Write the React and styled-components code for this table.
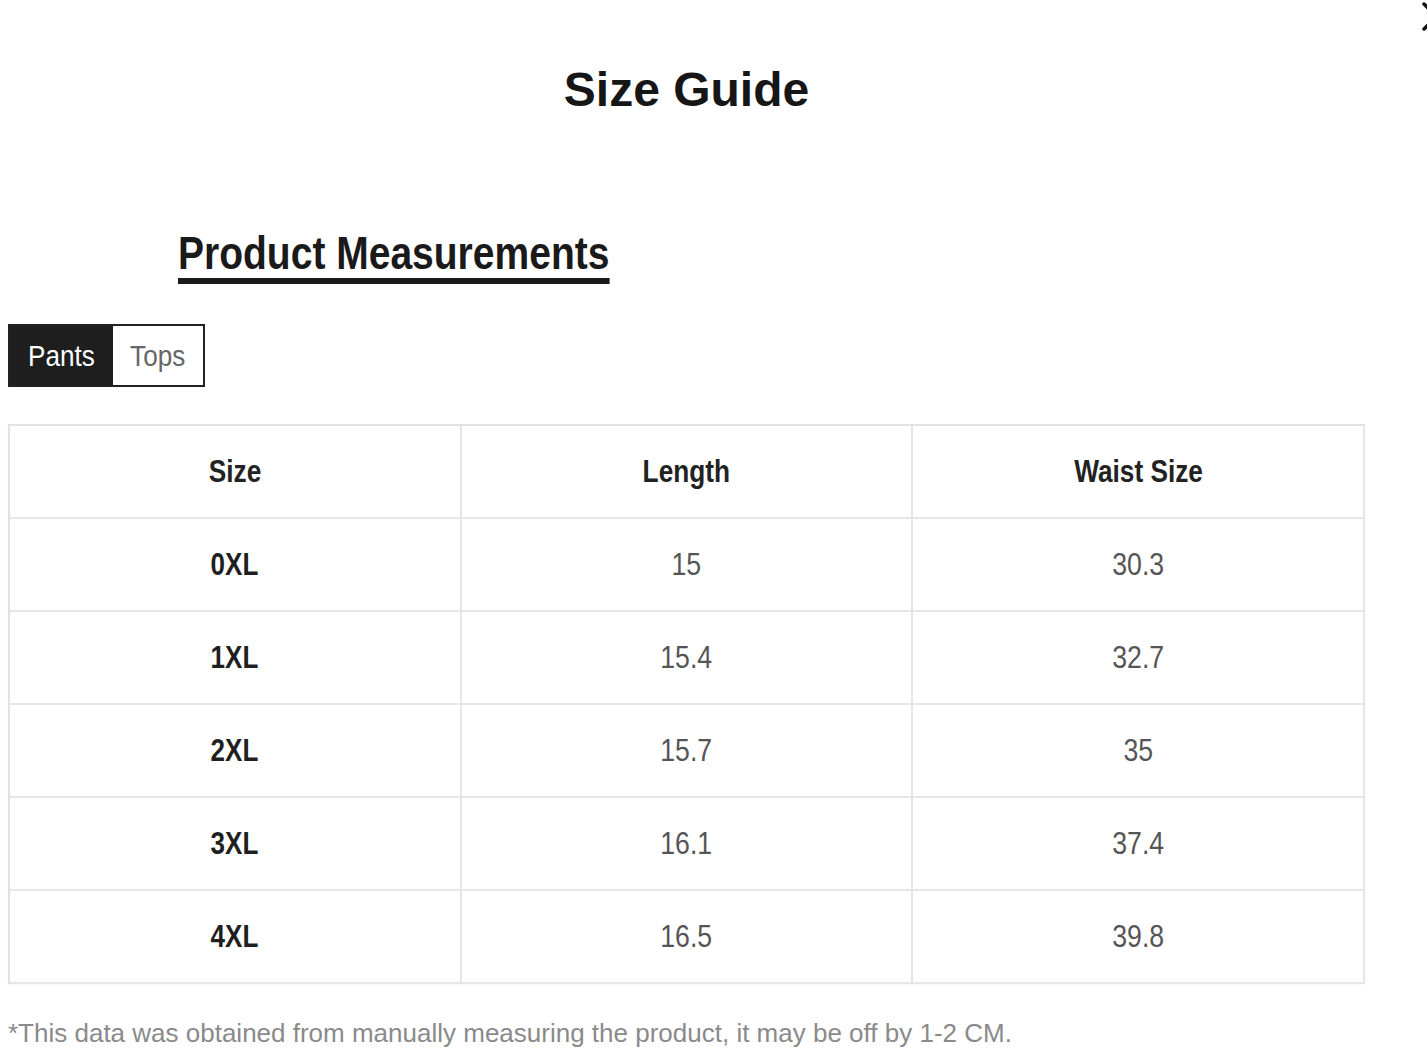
import React, { useState } from 'react';
import styled, { createGlobalStyle } from 'styled-components';

const SANS = '"Liberation Sans", Arial, Helvetica, sans-serif';

const GlobalStyle = createGlobalStyle`
  html, body {
    margin: 0;
    padding: 0;
    background: #ffffff;
    overflow: hidden;
  }
  body {
    font-family: ${SANS};
    color: #1a1a1a;
  }
`;

const sizes = {
  Pants: {
    columns: ['Size', 'Length', 'Waist Size'],
    rows: [
      ['0XL', '15', '30.3'],
      ['1XL', '15.4', '32.7'],
      ['2XL', '15.7', '35'],
      ['3XL', '16.1', '37.4'],
      ['4XL', '16.5', '39.8'],
    ],
  },
  Tops: {
    columns: ['Size', 'Length', 'Bust'],
    rows: [
      ['0XL', '25.2', '38.6'],
      ['1XL', '25.6', '40.9'],
      ['2XL', '26', '43.3'],
      ['3XL', '26.4', '45.7'],
      ['4XL', '26.8', '48'],
    ],
  },
};

// the condensed face of the original is not installed, so squeeze the glyphs
const Narrow = styled.span`
  display: inline-block;
  white-space: nowrap;
  transform: scaleX(${(p) => p.$scale || 0.83});
`;

const SizeGuide = () => {
  const [tab, setTab] = useState('Pants');
  const { columns, rows } = sizes[tab];

  return (
    <>
      <GlobalStyle />
      <Page>
        <CloseButton aria-label="Close">
          <svg width="30" height="30" viewBox="0 0 30 30">
            <path d="M2 3 L27 28 M2 28 L27 3" stroke="#111" strokeWidth="3.5" strokeLinecap="round" />
          </svg>
        </CloseButton>

        <Content>
          <Title>Size Guide</Title>

          <Heading>Product Measurements</Heading>

          <Tabs>
            {Object.keys(sizes).map((name) => (
              <Tab
                key={name}
                $active={name === tab}
                $width={name === 'Pants' ? 103 : 90}
                onClick={() => setTab(name)}
              >
                <Narrow $scale={0.87}>{name}</Narrow>
              </Tab>
            ))}
          </Tabs>

          <Table>
            {columns.map((col) => (
              <HeadCell key={col}>
                <Narrow $scale={0.82}>{col}</Narrow>
              </HeadCell>
            ))}
            {rows.map((row) =>
              row.map((value, i) => (
                <Cell key={row[0] + i} $strong={i === 0}>
                  <Narrow $scale={i === 0 ? 0.84 : 0.86}>{value}</Narrow>
                </Cell>
              ))
            )}
          </Table>

          <Note>
            *This data was obtained from manually measuring the product, it may be off by 1-2 CM.
          </Note>
        </Content>
      </Page>
    </>
  );
};

const Page = styled.div`
  position: relative;
  width: 1427px;
  height: 1055px;
  overflow: hidden;
`;

const CloseButton = styled.button`
  position: absolute;
  left: 1422px;
  top: 1px;
  padding: 0;
  border: none;
  background: none;
  cursor: pointer;
  svg {
    display: block;
  }
`;

const Content = styled.div`
  width: 1357px;
  margin-left: 8px;
  padding-top: 66px;
  display: flex;
  flex-direction: column;
`;

const Title = styled.h1`
  margin: 0;
  font-family: ${SANS};
  font-weight: 700;
  font-size: 48px;
  line-height: 48px;
  text-align: center;
  color: #161616;
`;

const Heading = styled.h2`
  align-self: flex-start;
  margin: 115px 0 0 170px;
  padding-bottom: 2px;
  font-family: ${SANS};
  font-weight: 700;
  font-size: 47px;
  line-height: 47px;
  color: #1a1a1a;
  border-bottom: 6px solid #1a1a1a;
  white-space: nowrap;
  transform: scaleX(0.83);
  transform-origin: left center;
`;

const Tabs = styled.div`
  align-self: flex-start;
  display: flex;
  height: 59px;
  margin-top: 40px;
  border: 2px solid #222;
`;

const Tab = styled.button`
  display: flex;
  align-items: center;
  justify-content: center;
  width: ${(p) => p.$width}px;
  padding: 0;
  border: none;
  background: ${(p) => (p.$active ? '#1e1e1e' : '#ffffff')};
  color: ${(p) => (p.$active ? '#ffffff' : '#666666')};
  font-family: ${SANS};
  font-size: 30px;
  cursor: pointer;
`;

const Table = styled.div`
  display: grid;
  grid-template-columns: repeat(3, 1fr);
  grid-auto-rows: 93px;
  margin-top: 37px;
  border-top: 2px solid #e2e2e2;
  border-left: 2px solid #e2e2e2;
  box-shadow: 0 1px 2px rgba(0, 0, 0, 0.04);
`;

const Cell = styled.div`
  display: flex;
  align-items: center;
  justify-content: center;
  border-right: 2px solid #e6e6e6;
  border-bottom: 2px solid #e6e6e6;
  font-family: ${SANS};
  font-size: 31px;
  font-weight: ${(p) => (p.$strong ? 700 : 400)};
  color: ${(p) => (p.$strong ? '#1f1f1f' : '#555555')};
`;

const HeadCell = styled(Cell)`
  font-size: 32px;
  font-weight: 700;
  color: #222222;
`;

const Note = styled.p`
  margin: 36px 0 0;
  font-family: ${SANS};
  font-size: 26px;
  line-height: 26px;
  color: #8a8a8a;
  white-space: nowrap;
`;

export default SizeGuide;
